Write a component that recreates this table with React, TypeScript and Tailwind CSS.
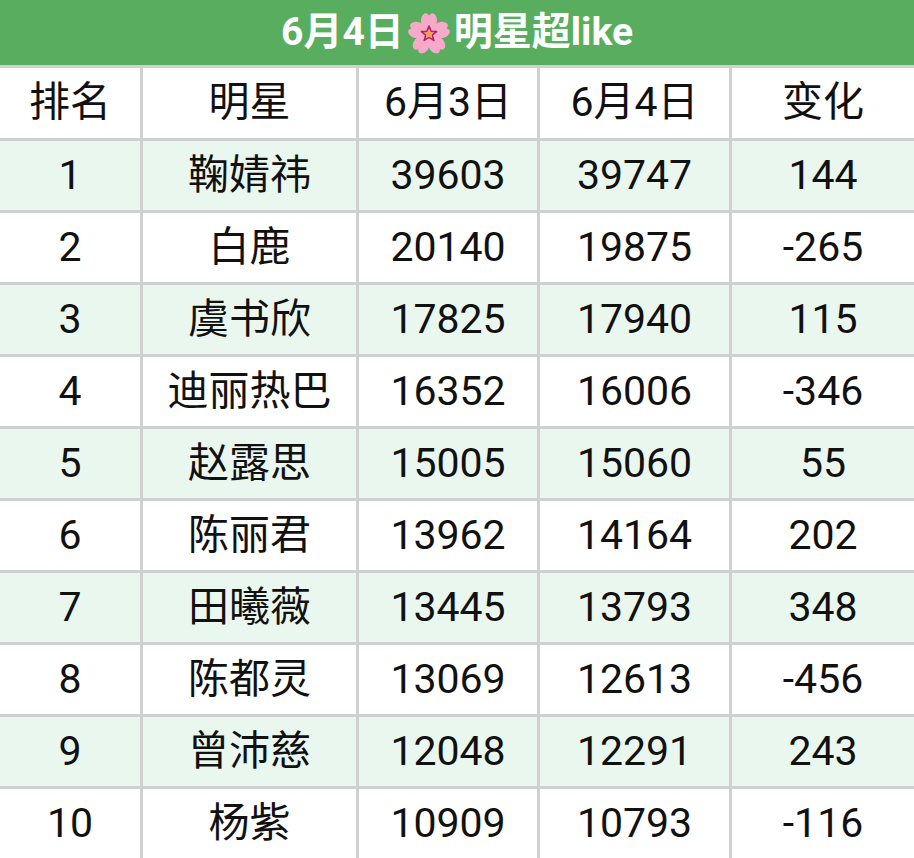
import React from 'react';

type Row = { rank: number; name: string; prev: number; curr: number; diff: number };

const rows: Row[] = [
    { rank: 1, name: '鞠婧祎', prev: 39603, curr: 39747, diff: 144 },
    { rank: 2, name: '白鹿', prev: 20140, curr: 19875, diff: -265 },
    { rank: 3, name: '虞书欣', prev: 17825, curr: 17940, diff: 115 },
    { rank: 4, name: '迪丽热巴', prev: 16352, curr: 16006, diff: -346 },
    { rank: 5, name: '赵露思', prev: 15005, curr: 15060, diff: 55 },
    { rank: 6, name: '陈丽君', prev: 13962, curr: 14164, diff: 202 },
    { rank: 7, name: '田曦薇', prev: 13445, curr: 13793, diff: 348 },
    { rank: 8, name: '陈都灵', prev: 13069, curr: 12613, diff: -456 },
    { rank: 9, name: '曾沛慈', prev: 12048, curr: 12291, diff: 243 },
    { rank: 10, name: '杨紫', prev: 10909, curr: 10793, diff: -116 },
];

const Blossom: React.FC = () => (
    <svg width="46" height="46" viewBox="0 0 40 40" className="mx-[2px]">
        {[0, 72, 144, 216, 288].map((a) => (
            <g key={a} transform={`rotate(${a} 20 21)`}>
                <path
                    d="M20 21 C13 16 11 8 15 4 C17 2 19 3 20 5 C21 3 23 2 25 4 C29 8 27 16 20 21 Z"
                    fill="#f6a9c8"
                />
            </g>
        ))}
        <path
            d="M20 14 L21.8 18.6 L26.6 18.8 L22.8 21.8 L24.2 26.4 L20 23.8 L15.8 26.4 L17.2 21.8 L13.4 18.8 L18.2 18.6 Z"
            fill="none"
            stroke="#b2235e"
            strokeWidth="1.4"
            strokeLinejoin="round"
        />
        <circle cx="20" cy="21" r="2.6" fill="#f5a04a" />
    </svg>
);

const cellBase = 'flex items-center justify-center text-[41px] text-[#111]';

export default function App() {
    return (
        <div
            className="w-[914px] h-[858px] overflow-hidden bg-white"
            style={{ fontFamily: 'Roboto, "Noto Sans CJK SC", sans-serif' }}
        >
            <div className="h-[65px] bg-[#58ae5e] flex items-center justify-center text-white text-[39px] font-bold leading-none">
                <span>6月4日</span>
                <Blossom />
                <span>明星超like</span>
            </div>

            <div className="grid grid-cols-[140px_213px_178px_189px_182px] gap-[3px] pt-[3px] bg-[#d0d0d0]">
                {['排名', '明星', '6月3日', '6月4日', '变化'].map((h) => (
                    <div key={h} className={`${cellBase} h-[70px] bg-white`}>
                        {h}
                    </div>
                ))}

                {rows.map((r) => {
                    const bg = r.rank % 2 === 1 ? 'bg-[#eaf7ef]' : 'bg-white';
                    return (
                        <React.Fragment key={r.rank}>
                            <div className={`${cellBase} h-[69px] ${bg}`}>{r.rank}</div>
                            <div className={`${cellBase} h-[69px] ${bg}`}>{r.name}</div>
                            <div className={`${cellBase} h-[69px] ${bg}`}>{r.prev}</div>
                            <div className={`${cellBase} h-[69px] ${bg}`}>{r.curr}</div>
                            <div className={`${cellBase} h-[69px] ${bg}`}>{r.diff}</div>
                        </React.Fragment>
                    );
                })}
            </div>
        </div>
    );
}
